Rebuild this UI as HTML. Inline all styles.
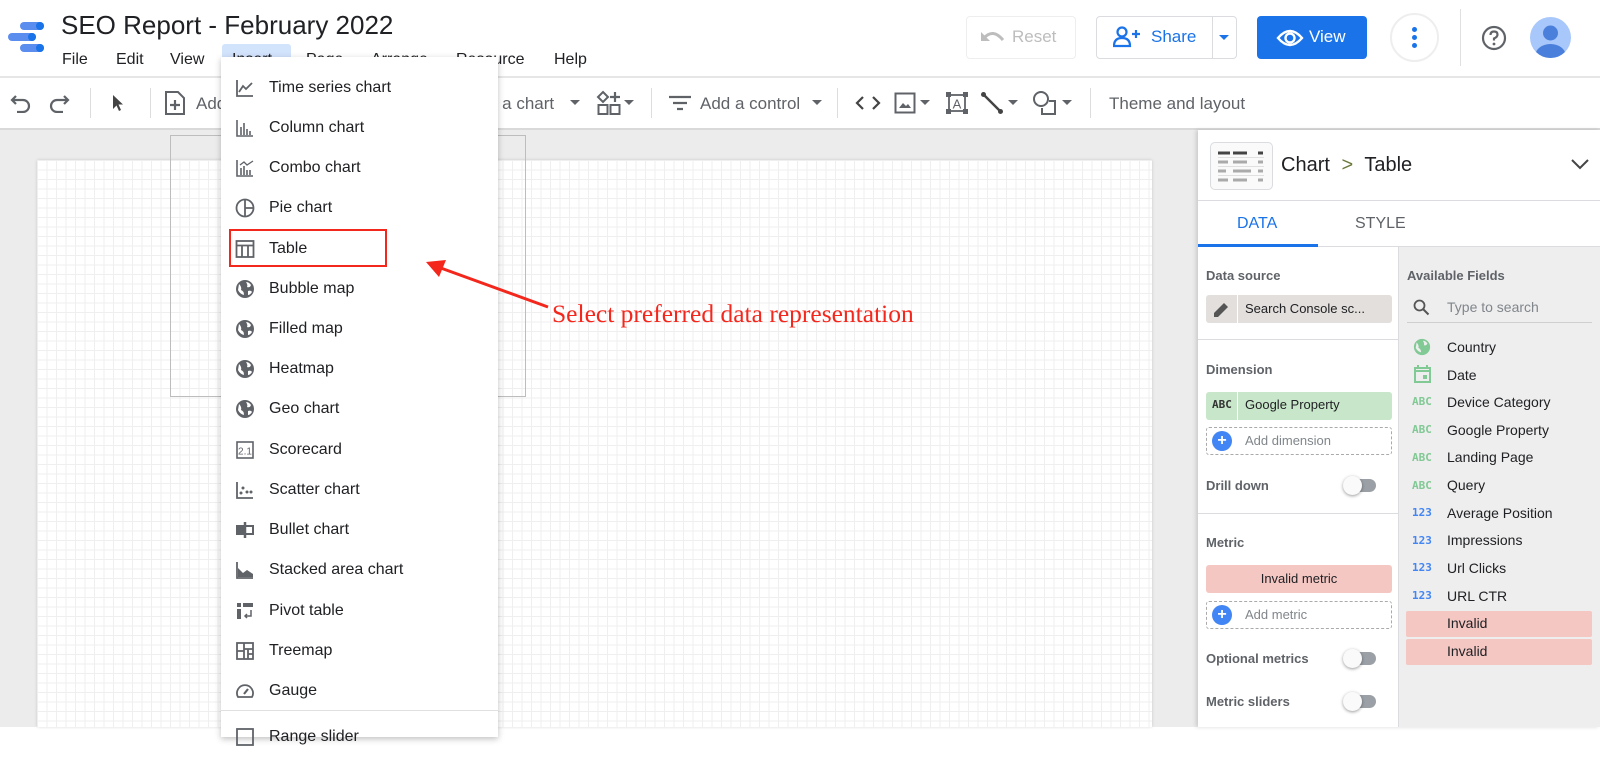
<!DOCTYPE html>
<html><head><meta charset="utf-8"><style>
*{margin:0;padding:0;box-sizing:border-box}
body{width:1600px;height:727px;overflow:hidden;position:relative;font-family:"Liberation Sans",Arial,sans-serif;background:#fff;color:#202124}
.a{position:absolute;white-space:nowrap}
.mi{position:absolute;left:0;width:277px;height:40px;line-height:40px;font-size:16px;color:#202124}
.mi span{position:absolute;left:48px}
.mi svg{position:absolute;left:14px;top:10px}
.lab{position:absolute;left:1206px;font-size:13px;font-weight:bold;color:#5f6368}
.fld{position:absolute;left:1447px;font-size:14px;color:#202124;line-height:20px}
.fi{position:absolute;left:1412px;font-size:11px;font-family:"DejaVu Sans Mono",monospace;font-weight:bold;line-height:20px}
.tg{position:absolute;width:33px;height:15px}
.tg:before{content:"";position:absolute;left:6px;top:1px;width:27px;height:13px;border-radius:7px;background:#9aa0a6}
.tg:after{content:"";position:absolute;left:0;top:-2px;width:19px;height:19px;border-radius:50%;background:#fafafa;box-shadow:0 1px 3px rgba(0,0,0,.4)}
.tb{position:absolute;font-size:17px;color:#5f6368;top:94px}
</style></head><body>

<!-- header -->
<svg class="a" style="left:8px;top:20px" width="36" height="36" viewBox="0 0 36 36">
<rect x="12" y="2" width="24" height="8" rx="4" fill="#5b8def"/><circle cx="32" cy="6" r="4" fill="#1a73e8"/>
<rect x="0" y="13" width="28" height="8" rx="4" fill="#5b8def"/><circle cx="24" cy="17" r="4" fill="#1a73e8"/>
<rect x="12" y="24" width="24" height="8" rx="4" fill="#5b8def"/><circle cx="32" cy="28" r="4" fill="#1a73e8"/>
</svg>
<div class="a" style="left:61px;top:10px;font-size:26px;color:#202124">SEO Report - February 2022</div>
<div class="a" style="left:222px;top:44px;width:69px;height:34px;background:#d2e3fc;border-radius:3px"></div>
<div class="a" style="left:62px;top:51px;font-size:16px">File</div>
<div class="a" style="left:116px;top:51px;font-size:16px">Edit</div>
<div class="a" style="left:170px;top:51px;font-size:16px">View</div>
<div class="a" style="left:232px;top:51px;font-size:16px">Insert</div>
<div class="a" style="left:306px;top:51px;font-size:16px">Page</div>
<div class="a" style="left:371px;top:51px;font-size:16px">Arrange</div>
<div class="a" style="left:456px;top:51px;font-size:16px">Resource</div>
<div class="a" style="left:554px;top:51px;font-size:16px">Help</div>

<div class="a" style="left:966px;top:16px;width:110px;height:43px;border:1px solid #eee;border-radius:4px"></div>
<svg class="a" style="left:980px;top:28px" width="26" height="18" viewBox="0 0 26 18"><path d="M4 10 Q13 0 23 12" stroke="#bdbdbd" stroke-width="3" fill="none"/><path d="M1 4 L1 13 L10 13Z" fill="#bdbdbd"/></svg>
<div class="a" style="left:1012px;top:27px;font-size:17px;color:#bdbdbd">Reset</div>
<div class="a" style="left:1096px;top:16px;width:141px;height:43px;border:1px solid #dadce0;border-radius:4px"></div>
<div class="a" style="left:1212px;top:17px;width:1px;height:41px;background:#dadce0"></div>
<svg class="a" style="left:1113px;top:26px" width="28" height="22" viewBox="0 0 28 22"><circle cx="9" cy="6" r="4.5" stroke="#1a73e8" stroke-width="2.2" fill="none"/><path d="M1 20 Q1 12 9 12 Q17 12 17 20Z" stroke="#1a73e8" stroke-width="2.2" fill="none"/><path d="M19 8h8M23 4v8" stroke="#1a73e8" stroke-width="2.2"/></svg>
<div class="a" style="left:1151px;top:27px;font-size:17px;color:#1a73e8">Share</div>
<svg class="a" style="left:1218px;top:34px" width="12" height="8"><path d="M1 1h10L6 6z" fill="#1a73e8"/></svg>
<div class="a" style="left:1257px;top:16px;width:110px;height:43px;background:#1a73e8;border-radius:4px"></div>
<svg class="a" style="left:1276px;top:27px" width="28" height="22" viewBox="0 0 28 22"><path d="M2 11 Q14 -3 26 11 Q14 25 2 11Z" stroke="#fff" stroke-width="2.4" fill="none"/><circle cx="14" cy="11" r="4.5" stroke="#fff" stroke-width="2.4" fill="none"/></svg>
<div class="a" style="left:1309px;top:27px;font-size:17px;color:#fff">View</div>
<div class="a" style="left:1390px;top:13px;width:49px;height:49px;border:2px solid #eee;border-radius:50%"></div>
<div class="a" style="left:1412px;top:27px;width:5px;height:5px;border-radius:50%;background:#1a73e8;box-shadow:0 8px 0 #1a73e8,0 16px 0 #1a73e8"></div>
<div class="a" style="left:1460px;top:9px;width:1px;height:57px;background:#e0e0e0"></div>
<svg class="a" style="left:1481px;top:25px" width="26" height="26" viewBox="0 0 26 26"><circle cx="13" cy="13" r="11" stroke="#5f6368" stroke-width="2.2" fill="none"/><path d="M9.5 10 Q9.5 6.5 13 6.5 Q16.5 6.5 16.5 9.5 Q16.5 12 13 13.5 V15.5" stroke="#5f6368" stroke-width="2.2" fill="none"/><circle cx="13" cy="19" r="1.4" fill="#5f6368"/></svg>
<svg class="a" style="left:1530px;top:17px" width="41" height="41" viewBox="0 0 41 41"><defs><clipPath id="c"><circle cx="20.5" cy="20.5" r="20.5"/></clipPath></defs><circle cx="20.5" cy="20.5" r="20.5" fill="#a8c7fa"/><g clip-path="url(#c)"><circle cx="20.5" cy="16" r="7.5" fill="#4a7fdb"/><ellipse cx="20.5" cy="38" rx="15" ry="11" fill="#4a7fdb"/></g></svg>

<!-- toolbar -->
<div class="a" style="left:0;top:76px;width:1600px;height:2px;background:#e6e6e6"></div>
<svg class="a" style="left:10px;top:93px" width="22" height="20" viewBox="0 0 22 20"><path d="M6 3 L2 7 L6 11 M2 7 H13 A6 6 0 0 1 13 19 H7" stroke="#5f6368" stroke-width="2.2" fill="none"/></svg>
<svg class="a" style="left:48px;top:93px" width="22" height="20" viewBox="0 0 22 20"><path d="M16 3 L20 7 L16 11 M20 7 H9 A6 6 0 0 0 9 19 H15" stroke="#5f6368" stroke-width="2.2" fill="none"/></svg>
<div class="a" style="left:90px;top:88px;width:1px;height:30px;background:#ddd"></div>
<svg class="a" style="left:111px;top:94px" width="14" height="18" viewBox="0 0 14 18"><path d="M2 1 L2 15 L5.5 11.5 L8 17 L10 16 L7.5 10.5 L12 10.5Z" fill="#444"/></svg>
<div class="a" style="left:150px;top:88px;width:1px;height:30px;background:#ddd"></div>
<svg class="a" style="left:164px;top:90px" width="22" height="26" viewBox="0 0 22 26"><path d="M2 2 H14 L20 8 V24 H2Z" stroke="#5f6368" stroke-width="2" fill="none"/><path d="M11 10 V20 M6 15 H16" stroke="#5f6368" stroke-width="2.2"/></svg>
<div class="tb" style="left:196px">Add</div>
<div class="tb" style="left:488px">d a chart</div>
<svg class="a" style="left:570px;top:100px" width="10" height="6"><path d="M0 0h10L5 5z" fill="#5f6368"/></svg>
<svg class="a" style="left:596px;top:90px" width="26" height="26" viewBox="0 0 26 26"><path d="M7 2 L12 7 L7 12 L2 7Z" stroke="#5f6368" stroke-width="2" fill="none"/><path d="M19 2v10M14 7h10" stroke="#5f6368" stroke-width="2.2"/><rect x="2.5" y="15" width="9" height="9" stroke="#5f6368" stroke-width="2" fill="none"/><rect x="14.5" y="15" width="9" height="9" stroke="#5f6368" stroke-width="2" fill="none"/></svg>
<svg class="a" style="left:624px;top:100px" width="10" height="6"><path d="M0 0h10L5 5z" fill="#5f6368"/></svg>
<div class="a" style="left:651px;top:88px;width:1px;height:30px;background:#ddd"></div>
<svg class="a" style="left:668px;top:94px" width="24" height="18" viewBox="0 0 24 18"><path d="M1 3h22M5 9h14M9 15h6" stroke="#5f6368" stroke-width="2.2"/></svg>
<div class="tb" style="left:700px">Add a control</div>
<svg class="a" style="left:812px;top:100px" width="10" height="6"><path d="M0 0h10L5 5z" fill="#5f6368"/></svg>
<div class="a" style="left:837px;top:88px;width:1px;height:30px;background:#ddd"></div>
<svg class="a" style="left:855px;top:95px" width="26" height="16" viewBox="0 0 26 16"><path d="M8 2 L2 8 L8 14 M18 2 L24 8 L18 14" stroke="#444" stroke-width="2.2" fill="none"/></svg>
<svg class="a" style="left:894px;top:92px" width="22" height="22" viewBox="0 0 22 22"><rect x="1.5" y="1.5" width="19" height="19" stroke="#5f6368" stroke-width="2" fill="none"/><path d="M5 16 L9 11 L12 14 L14 12 L17 16Z" fill="#5f6368"/></svg>
<svg class="a" style="left:920px;top:100px" width="10" height="6"><path d="M0 0h10L5 5z" fill="#5f6368"/></svg>
<svg class="a" style="left:946px;top:92px" width="22" height="22" viewBox="0 0 22 22"><rect x="3" y="3" width="16" height="16" stroke="#5f6368" stroke-width="1.8" fill="none"/><rect x="0" y="0" width="5" height="5" fill="#5f6368"/><rect x="17" y="0" width="5" height="5" fill="#5f6368"/><rect x="0" y="17" width="5" height="5" fill="#5f6368"/><rect x="17" y="17" width="5" height="5" fill="#5f6368"/><text x="11" y="16.5" font-size="13" text-anchor="middle" fill="#5f6368" font-family="Liberation Sans">A</text></svg>
<svg class="a" style="left:980px;top:91px" width="24" height="24" viewBox="0 0 24 24"><path d="M3 3 L21 21" stroke="#444" stroke-width="2.5"/><circle cx="3.5" cy="3.5" r="2.5" fill="#444"/><circle cx="20.5" cy="20.5" r="2.5" fill="#444"/></svg>
<svg class="a" style="left:1008px;top:100px" width="10" height="6"><path d="M0 0h10L5 5z" fill="#5f6368"/></svg>
<svg class="a" style="left:1032px;top:90px" width="26" height="26" viewBox="0 0 26 26"><circle cx="9" cy="9" r="7" stroke="#5f6368" stroke-width="2" fill="none"/><path d="M17 11 H23 V24 H10 V18" stroke="#5f6368" stroke-width="2" fill="none"/></svg>
<svg class="a" style="left:1062px;top:100px" width="10" height="6"><path d="M0 0h10L5 5z" fill="#5f6368"/></svg>
<div class="a" style="left:1090px;top:88px;width:1px;height:30px;background:#ddd"></div>
<div class="tb" style="left:1109px">Theme and layout</div>

<!-- canvas -->
<div class="a" style="left:0;top:128px;width:1600px;height:599px;background:#ececec;border-top:2px solid #d9d9d9"></div>
<div class="a" style="left:37px;top:160px;width:1115px;height:567px;background-color:#fff;background-image:linear-gradient(#efefef 1px,transparent 1px),linear-gradient(90deg,#efefef 1px,transparent 1px);background-size:9.5px 9.5px;box-shadow:0 0 3px rgba(0,0,0,.15)"></div>
<div class="a" style="left:170px;top:135px;width:356px;height:262px;border:1.5px solid #bdbdbd"></div>

<!-- menu -->
<div class="a" style="left:221px;top:57px;width:277px;height:680px;background:#fff;box-shadow:0 2px 6px rgba(0,0,0,.25)">
<div class="mi" style="top:11px"><svg width="20" height="20" viewBox="0 0 20 20"><path d="M2 2V18H18" stroke="#5f6368" stroke-width="1.8" fill="none"/><path d="M4 14 L8 8 L11 11 L17 5" stroke="#5f6368" stroke-width="1.8" fill="none"/></svg><span>Time series chart</span></div>
<div class="mi" style="top:51px"><svg width="20" height="20" viewBox="0 0 20 20"><path d="M2 2V18H18M6 17V9M9 17V5M12 17V11M15 17V13" stroke="#5f6368" stroke-width="1.6" fill="none"/></svg><span>Column chart</span></div>
<div class="mi" style="top:91px"><svg width="20" height="20" viewBox="0 0 20 20"><path d="M2 2V18H18M6 17V10M9 17V8M12 17V12M15 17V12" stroke="#5f6368" stroke-width="1.6" fill="none"/><path d="M5 7 L9 4 L12 7 L18 3" stroke="#5f6368" stroke-width="1.3" fill="none"/></svg><span>Combo chart</span></div>
<div class="mi" style="top:131px"><svg width="20" height="20" viewBox="0 0 20 20"><circle cx="10" cy="10" r="8.5" stroke="#5f6368" stroke-width="1.8" fill="none"/><path d="M10 1.5V18.5M10 10H18.5" stroke="#5f6368" stroke-width="1.8"/></svg><span>Pie chart</span></div>
<div class="mi" style="top:172px"><svg width="20" height="20" viewBox="0 0 20 20"><rect x="1.5" y="2" width="17" height="16" stroke="#5f6368" stroke-width="1.8" fill="none"/><path d="M1.5 6.5H18.5M7 6.5V18M13 6.5V18" stroke="#5f6368" stroke-width="1.8"/></svg><span>Table</span></div>
<div class="mi" style="top:212px"><svg width="20" height="20" viewBox="0 0 20 20"><circle cx="10" cy="10" r="9" fill="#5f6368"/><path d="M4 5 Q7 8 6 11 Q9 12 9 16 Q5 15 3 11Z M11 3 Q13 6 12 8 Q15 9 16 6 Q14 3 11 3Z M13 12 Q16 11 17 13 Q15 16 13 16Z" fill="#fff"/></svg><span>Bubble map</span></div>
<div class="mi" style="top:252px"><svg width="20" height="20" viewBox="0 0 20 20"><circle cx="10" cy="10" r="9" fill="#5f6368"/><path d="M4 5 Q7 8 6 11 Q9 12 9 16 Q5 15 3 11Z M11 3 Q13 6 12 8 Q15 9 16 6 Q14 3 11 3Z M13 12 Q16 11 17 13 Q15 16 13 16Z" fill="#fff"/></svg><span>Filled map</span></div>
<div class="mi" style="top:292px"><svg width="20" height="20" viewBox="0 0 20 20"><circle cx="10" cy="10" r="9" fill="#5f6368"/><path d="M4 5 Q7 8 6 11 Q9 12 9 16 Q5 15 3 11Z M11 3 Q13 6 12 8 Q15 9 16 6 Q14 3 11 3Z M13 12 Q16 11 17 13 Q15 16 13 16Z" fill="#fff"/></svg><span>Heatmap</span></div>
<div class="mi" style="top:332px"><svg width="20" height="20" viewBox="0 0 20 20"><circle cx="10" cy="10" r="9" fill="#5f6368"/><path d="M4 5 Q7 8 6 11 Q9 12 9 16 Q5 15 3 11Z M11 3 Q13 6 12 8 Q15 9 16 6 Q14 3 11 3Z M13 12 Q16 11 17 13 Q15 16 13 16Z" fill="#fff"/></svg><span>Geo chart</span></div>
<div class="mi" style="top:373px"><svg width="20" height="20" viewBox="0 0 20 20"><rect x="2" y="2" width="16" height="16" stroke="#5f6368" stroke-width="1.6" fill="none"/><text x="10" y="14.5" font-size="10" text-anchor="middle" fill="#5f6368" font-family="Liberation Sans">2.1</text></svg><span>Scorecard</span></div>
<div class="mi" style="top:413px"><svg width="20" height="20" viewBox="0 0 20 20"><path d="M2 2V18H18" stroke="#5f6368" stroke-width="1.8" fill="none"/><circle cx="8" cy="8" r="1.5" fill="#5f6368"/><circle cx="12" cy="12" r="1.5" fill="#5f6368"/><circle cx="6" cy="13" r="1.5" fill="#5f6368"/><circle cx="16" cy="12" r="1.5" fill="#5f6368"/></svg><span>Scatter chart</span></div>
<div class="mi" style="top:453px"><svg width="20" height="20" viewBox="0 0 20 20"><rect x="2" y="6" width="16" height="8" stroke="#5f6368" stroke-width="2" fill="none"/><path d="M10 2V18" stroke="#5f6368" stroke-width="2.5"/><rect x="2" y="6" width="8" height="8" fill="#5f6368"/></svg><span>Bullet chart</span></div>
<div class="mi" style="top:493px"><svg width="20" height="20" viewBox="0 0 20 20"><path d="M2 2V18H18" stroke="#5f6368" stroke-width="1.8" fill="none"/><path d="M3 17V8L8 13L12 10L18 14V17Z" fill="#5f6368"/></svg><span>Stacked area chart</span></div>
<div class="mi" style="top:534px"><svg width="20" height="20" viewBox="0 0 20 20"><rect x="2" y="2" width="4" height="4" fill="#5f6368"/><rect x="8" y="2" width="10" height="4" fill="#5f6368"/><rect x="2" y="8" width="4" height="10" fill="#5f6368"/><path d="M16 9V15H10M12 13L10 15L12 17" stroke="#5f6368" stroke-width="1.5" fill="none"/></svg><span>Pivot table</span></div>
<div class="mi" style="top:574px"><svg width="20" height="20" viewBox="0 0 20 20"><rect x="2" y="2" width="16" height="16" stroke="#5f6368" stroke-width="1.8" fill="none"/><path d="M9 2V18M2 10H9M9 8H18M13 8V18M13 13H18" stroke="#5f6368" stroke-width="1.8"/></svg><span>Treemap</span></div>
<div class="mi" style="top:614px"><svg width="20" height="20" viewBox="0 0 20 20"><path d="M3 16 A8 8 0 1 1 17 16Z" stroke="#5f6368" stroke-width="1.8" fill="none"/><path d="M9 13 L13 8" stroke="#5f6368" stroke-width="2.2"/></svg><span>Gauge</span></div>
<div class="a" style="left:0;top:653px;width:277px;height:1px;background:#e0e0e0"></div>
<div class="mi" style="top:660px"><svg width="20" height="20" viewBox="0 0 20 20"><rect x="2" y="2" width="16" height="16" stroke="#5f6368" stroke-width="1.8" fill="none"/></svg><span>Range slider</span></div>
</div>

<!-- annotation -->
<div class="a" style="left:229px;top:229px;width:158px;height:38px;border:2px solid #f4271c"></div>
<svg class="a" style="left:410px;top:250px" width="150" height="70" viewBox="0 0 150 70"><path d="M138 57 L28 17" stroke="#f4271c" stroke-width="3"/><path d="M16 12 L36 10 L29 27Z" fill="#f4271c"/></svg>
<div class="a" style="left:552px;top:299px;font-family:'Liberation Serif',serif;font-size:25.5px;color:#f4271c">Select preferred data representation</div>

<!-- right panel -->
<div class="a" style="left:1198px;top:130px;width:402px;height:597px;background:#fff;box-shadow:-2px 0 4px rgba(0,0,0,.15)"></div>
<div class="a" style="left:1210px;top:142px;width:63px;height:48px;border:1px solid #dadce0;border-radius:5px;background:#fafafa"></div>
<svg class="a" style="left:1216px;top:150px" width="52" height="32" viewBox="0 0 52 32"><path d="M2 3h12M17 3h14M42 3h5" stroke="#444" stroke-width="3"/><path d="M2 12h10M17 12h14M42 12h5M2 21h8M17 21h18M42 21h5M2 30h10M17 30h14M42 30h5" stroke="#aaa" stroke-width="3"/><path d="M2 7.5h46M2 16.5h46M2 25.5h46" stroke="#e0e0e0" stroke-width="1"/></svg>
<div class="a" style="left:1281px;top:154px;font-size:20px;color:#202124">Chart <span style="color:#6b7a3a;margin:0 6px">&gt;</span> Table</div>
<svg class="a" style="left:1570px;top:158px" width="20" height="12" viewBox="0 0 20 12"><path d="M2 2 L10 10 L18 2" stroke="#444" stroke-width="2" fill="none"/></svg>
<div class="a" style="left:1198px;top:200px;width:402px;height:1px;background:#dadce0"></div>
<div class="a" style="left:1237px;top:215px;font-size:16px;color:#1a73e8">DATA</div>
<div class="a" style="left:1355px;top:215px;font-size:16px;color:#5f6368">STYLE</div>
<div class="a" style="left:1198px;top:246px;width:402px;height:1px;background:#dadce0"></div>
<div class="a" style="left:1198px;top:244px;width:120px;height:3px;background:#1a73e8"></div>

<div class="a" style="left:1398px;top:247px;width:202px;height:480px;background:#eeeeee;border-left:1px solid #dadce0"></div>

<div class="lab" style="top:268px">Data source</div>
<div class="a" style="left:1206px;top:295px;width:186px;height:28px;background:#e3dfdc;border-radius:3px"></div>
<div class="a" style="left:1237px;top:295px;width:1px;height:28px;background:#fff"></div>
<svg class="a" style="left:1213px;top:301px" width="17" height="17" viewBox="0 0 17 17"><path d="M1 16 L1 12 L11 2 L15 6 L5 16Z" fill="#555"/></svg>
<div class="a" style="left:1245px;top:301px;font-size:13px;color:#202124">Search Console sc...</div>
<div class="a" style="left:1198px;top:339px;width:200px;height:1px;background:#dadce0"></div>

<div class="lab" style="top:362px">Dimension</div>
<div class="a" style="left:1206px;top:392px;width:186px;height:28px;background:#c8e6c9;border-radius:3px"></div>
<div class="a" style="left:1237px;top:392px;width:1px;height:28px;background:#fff"></div>
<div class="a" style="left:1212px;top:398px;font-size:11px;font-weight:bold;font-family:'DejaVu Sans Mono',monospace;color:#333">ABC</div>
<div class="a" style="left:1245px;top:397px;font-size:13px;color:#202124">Google Property</div>
<div class="a" style="left:1206px;top:427px;width:186px;height:28px;border:1px dashed #aaa;border-radius:3px"></div>
<div class="a" style="left:1212px;top:431px;width:20px;height:20px;border-radius:50%;background:#4285f4;color:#fff;font-size:16px;line-height:20px;text-align:center;font-weight:bold">+</div>
<div class="a" style="left:1245px;top:433px;font-size:13px;color:#80868b">Add dimension</div>

<div class="lab" style="top:478px">Drill down</div>
<div class="tg" style="left:1343px;top:478px"></div>
<div class="a" style="left:1198px;top:513px;width:200px;height:1px;background:#dadce0"></div>

<div class="lab" style="top:535px">Metric</div>
<div class="a" style="left:1206px;top:565px;width:186px;height:28px;background:#f4c7c3;border-radius:3px;text-align:center;line-height:28px;font-size:13px">Invalid metric</div>
<div class="a" style="left:1206px;top:601px;width:186px;height:28px;border:1px dashed #aaa;border-radius:3px"></div>
<div class="a" style="left:1212px;top:605px;width:20px;height:20px;border-radius:50%;background:#4285f4;color:#fff;font-size:16px;line-height:20px;text-align:center;font-weight:bold">+</div>
<div class="a" style="left:1245px;top:607px;font-size:13px;color:#80868b">Add metric</div>

<div class="lab" style="top:651px">Optional metrics</div>
<div class="tg" style="left:1343px;top:651px"></div>
<div class="lab" style="top:694px">Metric sliders</div>
<div class="tg" style="left:1343px;top:694px"></div>

<div class="lab" style="left:1407px;top:268px">Available Fields</div>
<svg class="a" style="left:1413px;top:299px" width="17" height="17" viewBox="0 0 17 17"><circle cx="6.5" cy="6.5" r="5" stroke="#555" stroke-width="1.8" fill="none"/><path d="M10 10 L15.5 15.5" stroke="#555" stroke-width="2"/></svg>
<div class="a" style="left:1447px;top:299px;font-size:14px;color:#80868b">Type to search</div>
<div class="a" style="left:1407px;top:322px;width:185px;height:1px;background:#cfcfcf"></div>

<svg class="a" style="left:1413px;top:338px" width="18" height="18" viewBox="0 0 20 20"><circle cx="10" cy="10" r="9" fill="#81c995"/><path d="M4 5 Q7 8 6 11 Q9 12 9 16 Q5 15 3 11Z M11 3 Q13 6 12 8 Q15 9 16 6 Q14 3 11 3Z" fill="#eee"/></svg>
<div class="fld" style="top:337px">Country</div>
<svg class="a" style="left:1414px;top:365px" width="17" height="18" viewBox="0 0 17 18"><rect x="1" y="3" width="15" height="14" stroke="#81c995" stroke-width="2" fill="none"/><path d="M1 6h15M4 0v4M13 0v4" stroke="#81c995" stroke-width="2"/><rect x="9" y="10" width="4" height="4" fill="#81c995"/></svg>
<div class="fld" style="top:365px">Date</div>
<div class="fi" style="top:392px;color:#81c995">ABC</div><div class="fld" style="top:392px">Device Category</div>
<div class="fi" style="top:420px;color:#81c995">ABC</div><div class="fld" style="top:420px">Google Property</div>
<div class="fi" style="top:448px;color:#81c995">ABC</div><div class="fld" style="top:447px">Landing Page</div>
<div class="fi" style="top:476px;color:#81c995">ABC</div><div class="fld" style="top:475px">Query</div>
<div class="fi" style="top:503px;color:#4285f4">123</div><div class="fld" style="top:503px">Average Position</div>
<div class="fi" style="top:531px;color:#4285f4">123</div><div class="fld" style="top:530px">Impressions</div>
<div class="fi" style="top:558px;color:#4285f4">123</div><div class="fld" style="top:558px">Url Clicks</div>
<div class="fi" style="top:586px;color:#4285f4">123</div><div class="fld" style="top:586px">URL CTR</div>
<div class="a" style="left:1406px;top:611px;width:186px;height:26px;background:#f4c7c3;border-radius:2px"></div>
<div class="fld" style="top:613px">Invalid</div>
<div class="a" style="left:1406px;top:639px;width:186px;height:26px;background:#f4c7c3;border-radius:2px"></div>
<div class="fld" style="top:641px">Invalid</div>
</body></html>
